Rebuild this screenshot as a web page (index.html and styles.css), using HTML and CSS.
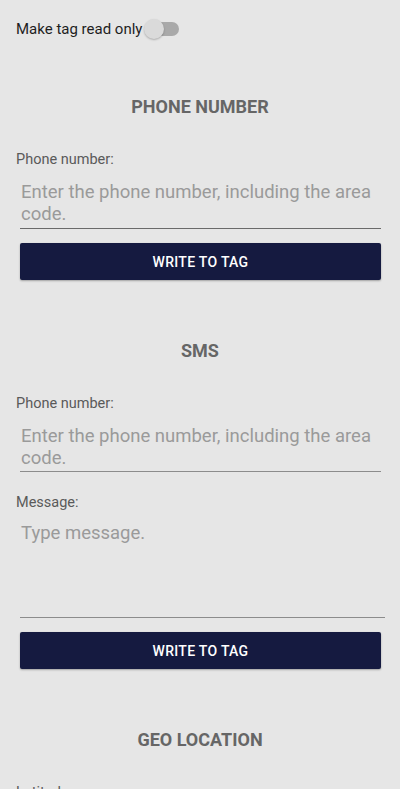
FILE: index.html
```html
<!DOCTYPE html>
<html>
<head>
<meta charset="utf-8">
<link rel="stylesheet" href="styles.css">
</head>
<body>
<div class="toggle-row">
  <span class="toggle-label">Make tag read only</span>
  <span class="switch"><span class="track"></span><span class="thumb"></span></span>
</div>

<section class="section">
  <h2 class="heading">PHONE NUMBER</h2>
  <div class="label">Phone number:</div>
  <div class="input">Enter the phone number, including the area code.</div>
  <button class="btn">WRITE TO TAG</button>
</section>

<section class="section">
  <h2 class="heading">SMS</h2>
  <div class="label">Phone number:</div>
  <div class="input input-light">Enter the phone number, including the area code.</div>
  <div class="label label-gap">Message:</div>
  <div class="input input-multi">Type message.</div>
  <button class="btn">WRITE TO TAG</button>
</section>

<section class="section">
  <h2 class="heading">GEO LOCATION</h2>
  <div class="label">Latitude:</div>
</section>
</body>
</html>
```
FILE: styles.css
```css
html, body {
  margin: 0;
  padding: 0;
  background: #e6e6e6;
  font-family: Roboto, "Noto Sans", sans-serif;
  overflow: hidden;
}
.toggle-row {
  display: flex;
  align-items: center;
  height: 30px;
  margin-top: 14px;
  padding-left: 16px;
}
.toggle-label {
  font-size: 15px;
  color: #1e1e1e;
}
.switch {
  position: relative;
  width: 34px;
  height: 20px;
  margin-left: 2px;
}
.track {
  position: absolute;
  left: 4px;
  top: 3px;
  width: 31px;
  height: 14px;
  border-radius: 7px;
  background: #a9a9a9;
}
.thumb {
  position: absolute;
  left: 0;
  top: 0;
  width: 20px;
  height: 20px;
  border-radius: 50%;
  background: #dadada;
  box-shadow: 0 1px 2px rgba(0,0,0,0.25);
}
.section {
  display: flex;
  flex-direction: column;
  padding-top: 51px;
}
.section + .section {
  padding-top: 59px;
}
.heading {
  margin: 0;
  text-align: center;
  font-size: 18px;
  line-height: 24px;
  font-weight: 700;
  color: #666;
}
.label {
  margin: 31px 0 0 16px;
  font-size: 14.5px;
  line-height: 20px;
  color: #5a5a5a;
}
.label-gap {
  margin-top: 21px;
}
.input {
  margin: 11px 19px 0 20px;
  padding: 0 0 3px 1px;
  font-size: 18.5px;
  line-height: 22px;
  color: #9a9a9a;
  border-bottom: 1.5px solid #6a6a6a;
}
.input-light {
  border-bottom-color: #8c8c8c;
  padding-bottom: 2px;
}
.input-multi {
  margin-top: 9px;
  margin-right: 15px;
  height: 96px;
  padding-bottom: 0;
  box-sizing: border-box;
  border-bottom-color: #8c8c8c;
}
.btn {
  margin: 14px 19px 0 20px;
  height: 37px;
  border: none;
  border-radius: 2px;
  background: #151a40;
  color: #fff;
  font-family: Roboto, sans-serif;
  font-size: 14px;
  font-weight: 500;
  letter-spacing: 0.3px;
  box-shadow: 0 1px 2px rgba(0,0,0,0.3);
}
```
